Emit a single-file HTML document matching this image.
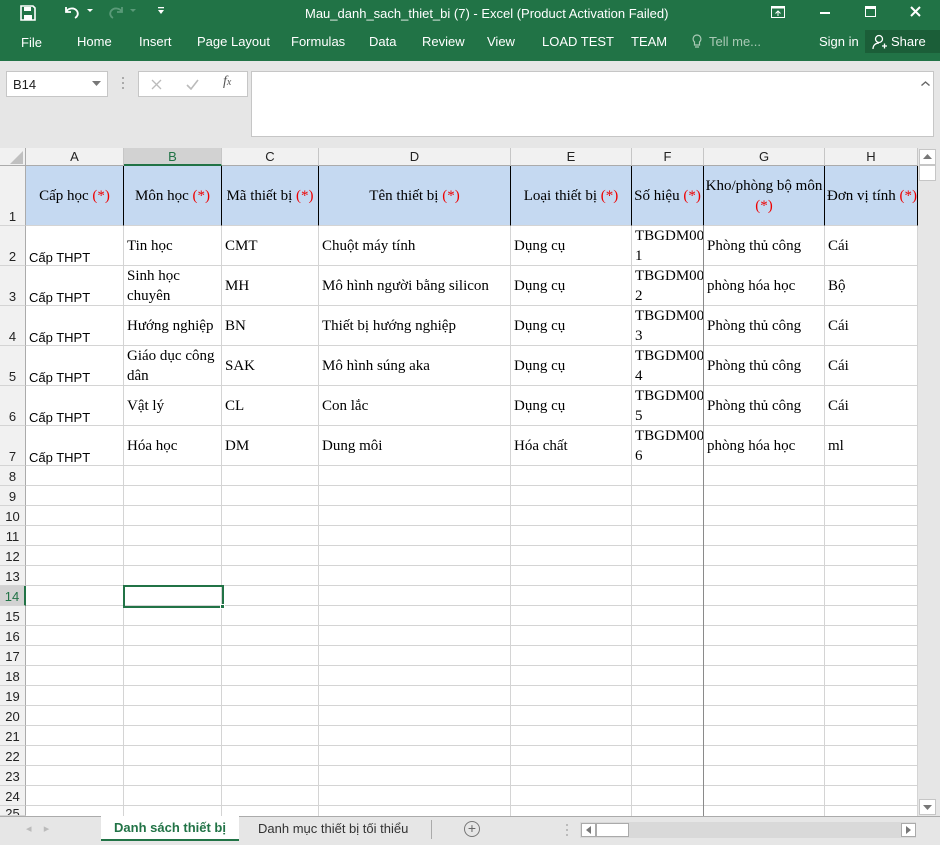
<!DOCTYPE html>
<html><head><meta charset="utf-8"><style>
*{margin:0;padding:0;box-sizing:border-box}
body{width:940px;height:845px;overflow:hidden;background:#e6e6e6;font-family:"Segoe UI","Liberation Sans",sans-serif;position:relative}
.a{position:absolute}
.tb{color:#fff;font-size:13px}
.ch{position:absolute;top:148px;height:18px;font-size:13px;color:#222;text-align:center;line-height:18px;font-family:"Liberation Sans",sans-serif;border-right:1px solid #c6c6c6;border-bottom:1px solid #ababab;background:#f1f1f1}
.rh{position:absolute;left:0;width:26px;font-size:13px;color:#222;text-align:center;font-family:"Liberation Sans",sans-serif;border-bottom:1px solid #d4d4d4;border-right:1px solid #ababab;background:#f1f1f1;display:flex;align-items:flex-end;justify-content:center;padding-bottom:1px}
.vl{position:absolute;top:166px;width:1px;height:650px;background:#d4d4d4}
.c{position:absolute;font-family:"Liberation Serif",serif;font-size:15px;line-height:20px;color:#000;display:flex;align-items:center;padding-left:3px;overflow:hidden}
.h{position:absolute;top:166px;height:60px;font-family:"Liberation Serif",serif;font-size:15px;line-height:20px;display:flex;align-items:center;justify-content:center;text-align:center;background:#c5d9f1;border-right:1px solid #000;border-bottom:1px solid #d4d4d4}
.r{color:#e00}
.s{position:absolute;font-family:"Liberation Sans",sans-serif;font-size:13px;left:29px}
</style></head><body>
<!-- title bar -->
<div class="a" style="left:0;top:0;width:940px;height:61px;background:#217346"></div>
<svg class="a" style="left:20px;top:5px" width="16" height="16" viewBox="0 0 16 16"><path d="M1 1h12l2 2v12H1z" fill="none" stroke="#fff" stroke-width="1.6"/><rect x="4" y="2" width="7" height="4" fill="#fff"/><rect x="4" y="10" width="8" height="5" fill="#fff"/></svg>
<svg class="a" style="left:63px;top:4px" width="30" height="16" viewBox="0 0 30 16"><path d="M3 3v5h5M3 8c2-4 8-5 11-1 2 3 0 6-2 7" fill="none" stroke="#fff" stroke-width="1.8"/><path d="M24 5l3 3 3-3z" fill="#fff"/></svg>
<svg class="a" style="left:106px;top:4px" width="30" height="16" viewBox="0 0 30 16"><path d="M16 3v5h-5M16 8c-2-4-8-5-11-1-2 3 0 6 2 7" fill="none" stroke="#5a9a78" stroke-width="1.8"/><path d="M24 5l3 3 3-3z" fill="#5a9a78"/></svg>
<svg class="a" style="left:157px;top:7px" width="8" height="8"><rect x="1" y="0" width="6" height="1.3" fill="#fff"/><path d="M1 3h6l-3 4z" fill="#fff"/></svg>
<div class="a tb" style="left:305px;top:6px">Mau_danh_sach_thiet_bi (7) - Excel (Product Activation Failed)</div>
<svg class="a" style="left:771px;top:6px" width="14" height="12"><rect x="0.5" y="0.5" width="13" height="11" fill="none" stroke="#fff"/><rect x="0.5" y="0.5" width="13" height="2" fill="#fff"/><path d="M7 10V5M4.5 7.5L7 5l2.5 2.5" stroke="#fff" fill="none"/></svg>
<div class="a" style="left:820px;top:12px;width:10px;height:2px;background:#fff"></div>
<div class="a" style="left:865px;top:6px;width:11px;height:11px;border:1.5px solid #fff;border-top-width:3px"></div>
<svg class="a" style="left:910px;top:6px" width="11" height="11"><path d="M1 1l9 9M10 1l-9 9" stroke="#fff" stroke-width="2"/></svg>
<div class="a tb" style="left:21px;top:35px">File</div>
<div class="a tb" style="left:77px;top:34px">Home</div>
<div class="a tb" style="left:139px;top:34px">Insert</div>
<div class="a tb" style="left:197px;top:34px">Page Layout</div>
<div class="a tb" style="left:291px;top:34px">Formulas</div>
<div class="a tb" style="left:369px;top:34px">Data</div>
<div class="a tb" style="left:422px;top:34px">Review</div>
<div class="a tb" style="left:487px;top:34px">View</div>
<div class="a tb" style="left:542px;top:34px">LOAD TEST</div>
<div class="a tb" style="left:631px;top:34px">TEAM</div>
<svg class="a" style="left:692px;top:34px" width="10" height="16"><path d="M5 1a4 4 0 0 0-2.5 7v3h5V8A4 4 0 0 0 5 1zM3 13h4" fill="none" stroke="#a9c9b5" stroke-width="1.2"/></svg>
<div class="a tb" style="left:709px;top:34px;color:#a9c9b5">Tell me...</div>
<div class="a tb" style="left:819px;top:34px">Sign in</div>
<div class="a" style="left:865px;top:30px;width:75px;height:23px;background:#1b5e38"></div>
<svg class="a" style="left:872px;top:34px" width="16" height="16"><circle cx="7" cy="5" r="3.5" fill="none" stroke="#fff" stroke-width="1.3"/><path d="M1 15c0-4 3-6 6-6M10 12h5M12.5 9.5v5" fill="none" stroke="#fff" stroke-width="1.3"/></svg>
<div class="a tb" style="left:891px;top:34px">Share</div>
<!-- formula bar -->
<div class="a" style="left:6px;top:71px;width:102px;height:26px;background:#fff;border:1px solid #c6c6c6;font-size:13px;padding:5px 0 0 6px;font-family:'Liberation Sans',sans-serif;color:#222">B14</div>
<svg class="a" style="left:92px;top:81px" width="9" height="5"><path d="M0 0h9L4.5 5z" fill="#777"/></svg>
<div class="a" style="left:122px;top:77px;width:2px;height:2px;background:#aaa;box-shadow:0 5px #aaa,0 10px #aaa"></div>
<div class="a" style="left:138px;top:71px;width:110px;height:26px;background:#fff;border:1px solid #c6c6c6"></div>
<svg class="a" style="left:151px;top:79px" width="11" height="11"><path d="M1 1l9 9M10 1l-9 9" stroke="#bbb" stroke-width="1.3"/></svg>
<svg class="a" style="left:186px;top:79px" width="13" height="11"><path d="M1 6l4 4 7-9" stroke="#bbb" stroke-width="1.6" fill="none"/></svg>
<div class="a" style="left:223px;top:74px;font-family:'Liberation Serif',serif;font-style:italic;font-size:14px;color:#555">f<span style="font-size:10px">x</span></div>
<div class="a" style="left:251px;top:71px;width:683px;height:66px;background:#fff;border:1px solid #c6c6c6"></div>
<svg class="a" style="left:921px;top:81px" width="9" height="5"><path d="M0.5 4.5L4.5 1l4 3.5" stroke="#666" stroke-width="1.4" fill="none"/></svg>
<!-- sheet bg -->
<div class="a" style="left:0;top:148px;width:918px;height:668px;background:#fff"></div>
<div class="a" style="left:0;top:148px;width:26px;height:18px;background:#f1f1f1;border-right:1px solid #ababab;border-bottom:1px solid #ababab"></div>
<svg class="a" style="left:10px;top:151px" width="14" height="13"><path d="M13 0v13H0z" fill="#c0c0c0"/></svg>
<div class="ch" style="left:26px;width:98px">A</div>
<div class="ch" style="left:124px;width:98px;background:#d2d2d2;border-bottom:2px solid #217346;color:#217346">B</div>
<div class="ch" style="left:222px;width:97px">C</div>
<div class="ch" style="left:319px;width:192px">D</div>
<div class="ch" style="left:511px;width:121px">E</div>
<div class="ch" style="left:632px;width:72px">F</div>
<div class="ch" style="left:704px;width:121px">G</div>
<div class="ch" style="left:825px;width:93px">H</div>
<!-- gridlines -->
<div class="a" style="left:26px;top:265px;width:892px;height:200px;background:repeating-linear-gradient(to bottom,#d4d4d4 0,#d4d4d4 1px,transparent 1px,transparent 40px)"></div>
<div class="a" style="left:26px;top:465px;width:892px;height:351px;background:repeating-linear-gradient(to bottom,#d4d4d4 0,#d4d4d4 1px,transparent 1px,transparent 20px)"></div>
<div class="vl" style="left:123px"></div><div class="vl" style="left:221px"></div><div class="vl" style="left:318px"></div><div class="vl" style="left:510px"></div><div class="vl" style="left:631px"></div><div class="vl" style="left:703px;background:#8a8a8a"></div><div class="vl" style="left:824px"></div><div class="vl" style="left:917px"></div>
<!-- header row 1 -->
<div class="h" style="left:26px;width:98px"><div>Cấp học <span class="r">(*)</span></div></div>
<div class="h" style="left:124px;width:98px"><div>Môn học <span class="r">(*)</span></div></div>
<div class="h" style="left:222px;width:97px"><div>Mã thiết bị <span class="r">(*)</span></div></div>
<div class="h" style="left:319px;width:192px"><div>Tên thiết bị <span class="r">(*)</span></div></div>
<div class="h" style="left:511px;width:121px"><div>Loại thiết bị <span class="r">(*)</span></div></div>
<div class="h" style="left:632px;width:72px;white-space:nowrap"><div>Số hiệu <span class="r">(*)</span></div></div>
<div class="h" style="left:704px;width:121px"><div>Kho/phòng bộ môn<br><span class="r">(*)</span></div></div>
<div class="h" style="left:825px;width:93px;justify-content:flex-start;padding-left:2px;white-space:nowrap"><div>Đơn vị tính <span class="r">(*)</span></div></div>
<!-- row headers -->
<div class="rh" style="top:166px;height:60px">1</div>
<div class="rh" style="top:226px;height:40px">2</div>
<div class="rh" style="top:266px;height:40px">3</div>
<div class="rh" style="top:306px;height:40px">4</div>
<div class="rh" style="top:346px;height:40px">5</div>
<div class="rh" style="top:386px;height:40px">6</div>
<div class="rh" style="top:426px;height:40px">7</div>
<div class="rh" style="top:466px;height:20px">8</div>
<div class="rh" style="top:486px;height:20px">9</div>
<div class="rh" style="top:506px;height:20px">10</div>
<div class="rh" style="top:526px;height:20px">11</div>
<div class="rh" style="top:546px;height:20px">12</div>
<div class="rh" style="top:566px;height:20px">13</div>
<div class="rh" style="top:586px;height:20px;background:#d2d2d2;color:#217346;border-right:2px solid #217346">14</div>
<div class="rh" style="top:606px;height:20px">15</div>
<div class="rh" style="top:626px;height:20px">16</div>
<div class="rh" style="top:646px;height:20px">17</div>
<div class="rh" style="top:666px;height:20px">18</div>
<div class="rh" style="top:686px;height:20px">19</div>
<div class="rh" style="top:706px;height:20px">20</div>
<div class="rh" style="top:726px;height:20px">21</div>
<div class="rh" style="top:746px;height:20px">22</div>
<div class="rh" style="top:766px;height:20px">23</div>
<div class="rh" style="top:786px;height:20px">24</div>
<div class="rh" style="top:806px;height:10px;overflow:hidden;align-items:flex-start">25</div>
<!-- col A -->
<div class="s" style="top:250px">Cấp THPT</div>
<div class="s" style="top:290px">Cấp THPT</div>
<div class="s" style="top:330px">Cấp THPT</div>
<div class="s" style="top:370px">Cấp THPT</div>
<div class="s" style="top:410px">Cấp THPT</div>
<div class="s" style="top:450px">Cấp THPT</div>
<!-- data rows -->
<div class="c" style="left:124px;top:226px;width:97px;height:40px">Tin học</div>
<div class="c" style="left:124px;top:266px;width:97px;height:40px">Sinh học<br>chuyên</div>
<div class="c" style="left:124px;top:306px;width:97px;height:40px">Hướng nghiệp</div>
<div class="c" style="left:124px;top:346px;width:97px;height:40px">Giáo dục công<br>dân</div>
<div class="c" style="left:124px;top:386px;width:97px;height:40px">Vật lý</div>
<div class="c" style="left:124px;top:426px;width:97px;height:40px">Hóa học</div>
<div class="c" style="left:222px;top:226px;width:96px;height:40px">CMT</div>
<div class="c" style="left:222px;top:266px;width:96px;height:40px">MH</div>
<div class="c" style="left:222px;top:306px;width:96px;height:40px">BN</div>
<div class="c" style="left:222px;top:346px;width:96px;height:40px">SAK</div>
<div class="c" style="left:222px;top:386px;width:96px;height:40px">CL</div>
<div class="c" style="left:222px;top:426px;width:96px;height:40px">DM</div>
<div class="c" style="left:319px;top:226px;width:191px;height:40px">Chuột máy tính</div>
<div class="c" style="left:319px;top:266px;width:191px;height:40px">Mô hình người bằng silicon</div>
<div class="c" style="left:319px;top:306px;width:191px;height:40px">Thiết bị hướng nghiệp</div>
<div class="c" style="left:319px;top:346px;width:191px;height:40px">Mô hình súng aka</div>
<div class="c" style="left:319px;top:386px;width:191px;height:40px">Con lắc</div>
<div class="c" style="left:319px;top:426px;width:191px;height:40px">Dung môi</div>
<div class="c" style="left:511px;top:226px;width:120px;height:40px">Dụng cụ</div>
<div class="c" style="left:511px;top:266px;width:120px;height:40px">Dụng cụ</div>
<div class="c" style="left:511px;top:306px;width:120px;height:40px">Dụng cụ</div>
<div class="c" style="left:511px;top:346px;width:120px;height:40px">Dụng cụ</div>
<div class="c" style="left:511px;top:386px;width:120px;height:40px">Dụng cụ</div>
<div class="c" style="left:511px;top:426px;width:120px;height:40px">Hóa chất</div>
<div class="c" style="left:632px;top:226px;width:71px;height:40px">TBGDM00<br>1</div>
<div class="c" style="left:632px;top:266px;width:71px;height:40px">TBGDM00<br>2</div>
<div class="c" style="left:632px;top:306px;width:71px;height:40px">TBGDM00<br>3</div>
<div class="c" style="left:632px;top:346px;width:71px;height:40px">TBGDM00<br>4</div>
<div class="c" style="left:632px;top:386px;width:71px;height:40px">TBGDM00<br>5</div>
<div class="c" style="left:632px;top:426px;width:71px;height:40px">TBGDM00<br>6</div>
<div class="c" style="left:704px;top:226px;width:120px;height:40px">Phòng thủ công</div>
<div class="c" style="left:704px;top:266px;width:120px;height:40px">phòng hóa học</div>
<div class="c" style="left:704px;top:306px;width:120px;height:40px">Phòng thủ công</div>
<div class="c" style="left:704px;top:346px;width:120px;height:40px">Phòng thủ công</div>
<div class="c" style="left:704px;top:386px;width:120px;height:40px">Phòng thủ công</div>
<div class="c" style="left:704px;top:426px;width:120px;height:40px">phòng hóa học</div>
<div class="c" style="left:825px;top:226px;width:92px;height:40px">Cái</div>
<div class="c" style="left:825px;top:266px;width:92px;height:40px">Bộ</div>
<div class="c" style="left:825px;top:306px;width:92px;height:40px">Cái</div>
<div class="c" style="left:825px;top:346px;width:92px;height:40px">Cái</div>
<div class="c" style="left:825px;top:386px;width:92px;height:40px">Cái</div>
<div class="c" style="left:825px;top:426px;width:92px;height:40px">ml</div>
<!-- selection -->
<div class="a" style="left:123px;top:585px;width:101px;height:23px;border:2px solid #217346"></div>
<div class="a" style="left:220px;top:604px;width:5px;height:5px;background:#217346;border:1px solid #fff"></div>
<!-- vertical scrollbar -->
<div class="a" style="left:918px;top:148px;width:22px;height:668px;background:#e6e6e6"></div>
<div class="a" style="left:919px;top:149px;width:17px;height:16px;background:#fff;border:1px solid #c6c6c6"></div>
<svg class="a" style="left:923px;top:154px" width="9" height="5"><path d="M0 5h9L4.5 0z" fill="#777"/></svg>
<div class="a" style="left:919px;top:165px;width:17px;height:16px;background:#fff;border:1px solid #c6c6c6"></div>
<div class="a" style="left:919px;top:799px;width:17px;height:16px;background:#fff;border:1px solid #c6c6c6"></div>
<svg class="a" style="left:923px;top:805px" width="9" height="5"><path d="M0 0h9L4.5 5z" fill="#777"/></svg>
<!-- tab bar -->
<div class="a" style="left:0;top:816px;width:940px;height:29px;background:#e6e6e6;border-top:1px solid #ababab"></div>
<div class="a" style="left:26px;top:822px;font-size:11px;color:#bbb">◂&nbsp;&nbsp;&nbsp;&nbsp;▸</div>
<div class="a" style="left:101px;top:816px;width:138px;height:25px;background:#fff;border-bottom:2px solid #217346;color:#217346;font-weight:bold;font-size:13px;text-align:center;line-height:24px">Danh sách thiết bị</div>
<div class="a" style="left:258px;top:821px;font-size:13px;color:#333">Danh mục thiết bị tối thiểu</div>
<div class="a" style="left:431px;top:820px;width:1px;height:19px;background:#aaa"></div>
<div class="a" style="left:464px;top:821px;width:16px;height:16px;border:1px solid #777;border-radius:50%;font-size:14px;line-height:13px;text-align:center;color:#666">+</div>
<div class="a" style="left:566px;top:824px;width:2px;height:2px;background:#bbb;box-shadow:0 5px #bbb,0 10px #bbb"></div>
<div class="a" style="left:580px;top:822px;width:336px;height:16px;background:#d9d9d9"></div>
<div class="a" style="left:581px;top:823px;width:15px;height:14px;background:#fff;border:1px solid #aaa"></div>
<svg class="a" style="left:586px;top:826px" width="5" height="8"><path d="M5 0v8L0 4z" fill="#777"/></svg>
<div class="a" style="left:596px;top:823px;width:33px;height:14px;background:#fff;border:1px solid #aaa"></div>
<div class="a" style="left:901px;top:823px;width:15px;height:14px;background:#fff;border:1px solid #aaa"></div>
<svg class="a" style="left:906px;top:826px" width="5" height="8"><path d="M0 0v8L5 4z" fill="#777"/></svg>
</body></html>
